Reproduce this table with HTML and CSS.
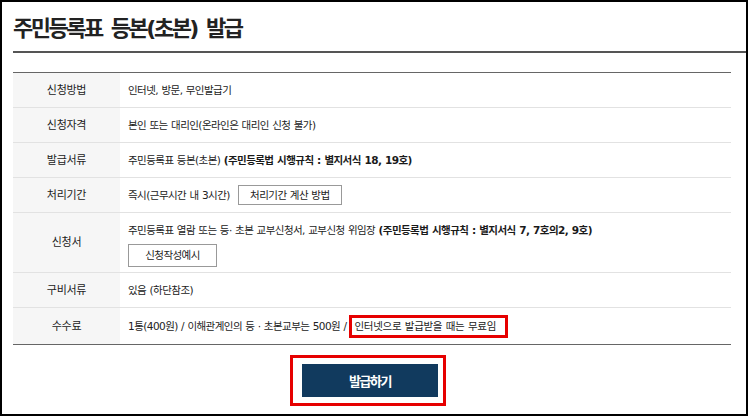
FILE: index.html
```html
<!DOCTYPE html>
<html lang="ko">
<head>
<meta charset="utf-8">
<title>주민등록표 등본(초본) 발급</title>
<link rel="stylesheet" href="styles.css">
</head>
<body>
<div class="frame">
  <h1 class="title">주민등록표 등본(초본) 발급</h1>
  <table class="info">
    <tbody>
      <tr>
        <th>신청방법</th>
        <td>인터넷, 방문, 무인발급기</td>
      </tr>
      <tr>
        <th>신청자격</th>
        <td>본인 또는 대리인(온라인은 대리인 신청 불가)</td>
      </tr>
      <tr>
        <th>발급서류</th>
        <td>주민등록표 등본(초본) <b>(주민등록법 시행규칙 : 별지서식 18, 19호)</b></td>
      </tr>
      <tr>
        <th>처리기간</th>
        <td>즉시(근무시간 내 3시간) <span class="sbtn">처리기간 계산 방법</span></td>
      </tr>
      <tr class="tall">
        <th>신청서</th>
        <td>
          <div class="line">주민등록표 열람 또는 등· 초본 교부신청서, 교부신청 위임장 <b>(주민등록법 시행규칙 : 별지서식 7, 7호의2, 9호)</b></div>
          <span class="sbtn wide">신청작성예시</span>
        </td>
      </tr>
      <tr>
        <th>구비서류</th>
        <td>있음 (하단참조)</td>
      </tr>
      <tr class="last">
        <th>수수료</th>
        <td>1통(400원) / 이해관계인의 등 · 초본교부는 500원 /<span class="mark">인터넷으로 발급받을 때는 무료임</span></td>
      </tr>
    </tbody>
  </table>
  <div class="actions">
    <div class="mark-box"><span class="issue">발급하기</span></div>
  </div>
</div>
</body>
</html>
```

FILE: styles.css
```css
* { box-sizing: border-box; }
html, body { margin: 0; padding: 0; background: #fff; }
body {
  font-family: "DejaVu Sans", "Noto Sans CJK KR", sans-serif;
  color: #222;
}
.frame {
  width: 748px;
  height: 416px;
  border: 2px solid #000;
  display: flex;
  flex-direction: column;
}
.title {
  margin: 0 0 19px 11px;
  padding: 12px 0 7px 0;
  font-size: 22px;
  line-height: 30px;
  font-weight: 700;
  letter-spacing: -2.5px;
  word-spacing: 4px;
  color: #222;
  border-bottom: 2px solid #555;
}
.info {
  margin: 0 15px 0 11px;
  width: 718px;
  border-collapse: collapse;
  border-top: 1px solid #666;
  font-size: 10.5px;
  letter-spacing: -0.55px;
  word-spacing: 0.5px;
}
.info th, .info td {
  height: 35px;
  padding: 0;
  border-bottom: 1px solid #e2e2e2;
  vertical-align: middle;
  line-height: 17px;
}
.info th {
  width: 107px;
  background: #f6f6f6;
  font-weight: 400;
  font-size: 11px;
  letter-spacing: -0.3px;
  text-align: center;
  color: #222;
}
.info td {
  padding-left: 8px;
  text-align: left;
}
.info b { font-weight: 700; color: #1a1a1a; }
.info tr.tall th, .info tr.tall td { height: 60px; }
.info tr.tall td { padding-top: 3px; }
.info tr.last th, .info tr.last td {
  height: 37px;
  border-bottom: 1px solid #666;
}
.line { margin-bottom: 5px; }
.sbtn {
  display: inline-flex;
  align-items: center;
  justify-content: center;
  height: 20px;
  padding: 0 11px;
  margin-left: 5px;
  border: 1px solid #999;
  background: #fff;
  color: #222;
  font-size: 10.5px;
}
.sbtn.wide {
  width: 89px;
  height: 23px;
  margin-left: 0;
}
.mark {
  display: inline-block;
  border: 3px solid #e60000;
  padding: 0 9px 0 2px;
  line-height: 17px;
  margin-left: 3px;
  letter-spacing: -0.3px;
}
.actions {
  margin: 10px 15px 0 11px;
  display: flex;
  justify-content: center;
}
.mark-box {
  border: 3px solid #e60000;
  padding: 6px 5px 6px 9px;
  margin-right: 8px;
}
.issue {
  display: flex;
  align-items: center;
  justify-content: center;
  width: 136px;
  height: 33px;
  background: #113a5e;
  color: #fff;
  font-size: 13px;
  font-weight: 700;
  letter-spacing: -1.4px;
}
```
